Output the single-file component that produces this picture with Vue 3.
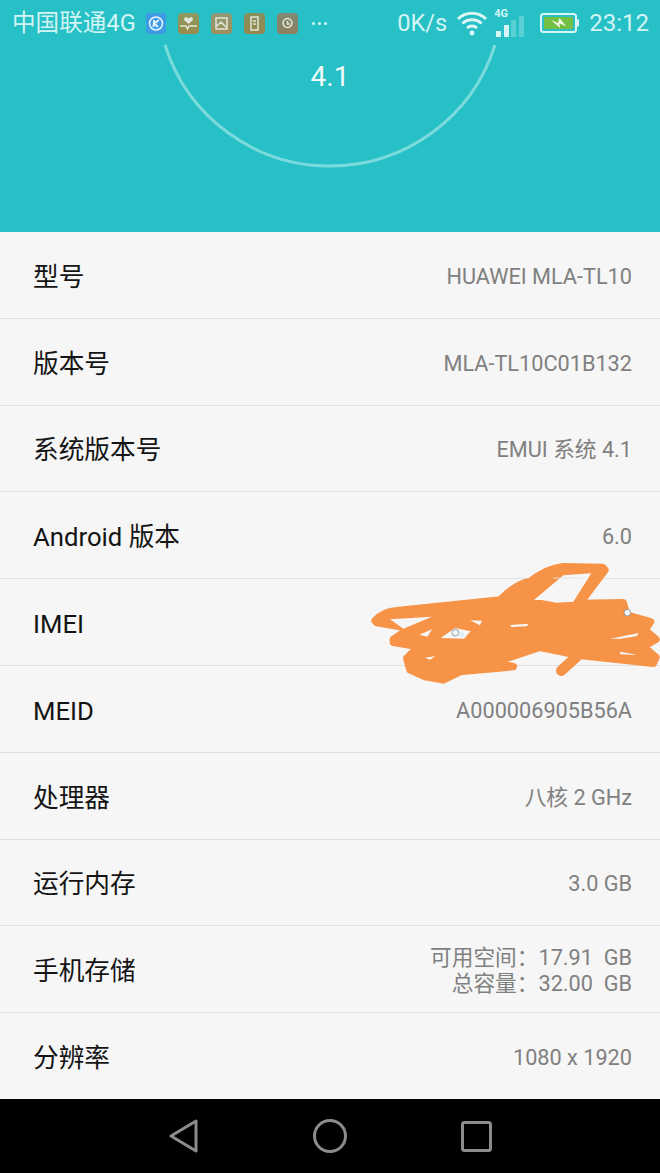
<template>
  <div class="screen">
    <header class="top">
      <svg class="gauge" width="660" height="232" viewBox="0 0 660 232">
        <path d="M165 45 A173 173 0 0 0 495 45" fill="none" stroke="#7bdadc" stroke-width="3" />
      </svg>
      <div class="status">
        <span class="carrier">中国联通4G</span>
        <div class="notif">
          <svg width="20" height="21" viewBox="0 0 20 21">
            <rect width="20" height="21" rx="3" fill="#3f9ae6" />
            <circle cx="10" cy="10.500" r="6.500" fill="none" stroke="#eaf6fc" stroke-width="1.500" />
            <path d="M8.200 7 L7.400 14 M12.800 7 L8.400 10.500 L11.800 14" fill="none" stroke="#eaf6fc" stroke-width="1.800" />
          </svg>
          <svg v-for="n in notifs" :key="n.id" width="21" height="21" viewBox="0 0 21 21">
            <defs>
              <linearGradient :id="'g' + n.id" x1="0" y1="0" x2="0" y2="1">
                <stop offset="0" :stop-color="n.from" />
                <stop offset="1" :stop-color="n.to" />
              </linearGradient>
            </defs>
            <rect width="21" height="21" rx="4" :fill="'url(#g' + n.id + ')'" />
            <path v-if="n.fill" :d="n.fill" fill="#dfe8d8" />
            <path :d="n.d" fill="none" stroke="#dfe8d8" stroke-width="1.500" />
          </svg>
          <span class="more"><i></i><i></i><i></i></span>
        </div>
        <div class="right">
          <span class="speed">0K/s</span>
          <svg width="32" height="26" viewBox="0 0 32 26">
            <path d="M2 9 A20 20 0 0 1 30 9 M6.500 13.500 A14 14 0 0 1 25.500 13.500 M11 18 A7.500 7.500 0 0 1 21 18" fill="none" stroke="#dff6f6" stroke-width="3" />
            <circle cx="16" cy="23" r="2.400" fill="#dff6f6" />
          </svg>
          <div class="signal">
            <span class="lte">4G</span>
            <i class="bar b1"></i><i class="bar b2"></i><i class="bar b3"></i><i class="bar b4"></i>
          </div>
          <svg class="batt" width="39" height="20" viewBox="0 0 39 20">
            <rect x="1" y="1" width="35" height="18" rx="2.500" fill="none" stroke="#d8f5f5" stroke-width="2" />
            <rect x="4" y="4" width="29" height="12" fill="#72bf44" />
            <rect x="36.500" y="6.500" width="2.500" height="7" fill="#d8f5f5" />
            <path d="M11 7 L18 10 L19.500 5 L26 13 L19.500 10.500 L20 15 Z" fill="#f3f6e0" />
          </svg>
          <span class="time">23:12</span>
        </div>
      </div>
      <div class="version">4.1</div>
    </header>

    <main class="list">
      <div v-for="row in rows" :key="row.label" class="row">
        <span class="label">{{ row.label }}</span>
        <div class="value">
          <div v-for="line in row.value" :key="line">{{ line }}</div>
        </div>
      </div>
      <!-- hand-drawn redaction over the IMEI value -->
      <svg class="scribble" width="300" height="140" viewBox="0 0 900 420">
        <path
          fill="#f69347"
          stroke="#f69347"
          stroke-width="22"
          stroke-linejoin="round"
          d="M45 212 Q70 185 110 182 L420 150 Q470 100 510 95 Q560 55 610 50 L728 52 L735 60 L660 160 L790 158 L800 195 L872 215 L855 240 L888 268 L850 290 L888 322 L880 340 L650 315 L540 292 L400 338 L460 350 L300 365 L250 390 L195 380 L150 360 L140 325 L175 290 L100 277 L100 268 L150 235 L50 218 Z"
        />
        <path d="M604 362 L650 320" fill="none" stroke="#f69347" stroke-width="32" stroke-linecap="round" />
        <g fill="#f6f6f6">
          <path d="M522 150 L610 76 L694 70 L640 155 L590 158 L545 150 Z" />
          <path d="M90 208 L216 200 L130 236 Z" />
          <path d="M178 254 L216 238 L202 260 Z" />
          <path d="M242 264 L285 234 L332 244 L312 266 Z" />
          <path d="M330 211 L366 212 L360 226 Z" />
          <path d="M450 225 L506 221 L500 229 L454 231 Z" />
          <path d="M194 323 L226 319 L210 329 Z" />
          <path d="M750 266 L836 249 L830 259 L780 266 Z" />
          <path d="M780 305 L836 315 L780 312 Z" />
        </g>
        <path d="M580 84 L668 84" stroke="#e0e0e0" stroke-width="3" />
        <circle cx="802" cy="188" r="10" fill="#f4f7f8" stroke="#68717a" stroke-width="2" />
        <circle cx="286" cy="248" r="10" fill="#f4f7f8" stroke="#68717a" stroke-width="2" />
        <circle cx="304" cy="254" r="8" fill="#e2eef5" />
      </svg>
    </main>

    <nav class="nav">
      <svg width="30" height="34" viewBox="0 0 30 34">
        <path d="M2 17 L27 2 V32 Z" fill="none" stroke="#8c8c8c" stroke-width="3" stroke-linejoin="round" />
      </svg>
      <svg width="34" height="34" viewBox="0 0 34 34">
        <circle cx="17" cy="17" r="15.500" fill="none" stroke="#8c8c8c" stroke-width="3" />
      </svg>
      <svg width="31" height="31" viewBox="0 0 31 31">
        <rect x="1.500" y="1.500" width="28" height="28" rx="2" fill="none" stroke="#8c8c8c" stroke-width="3" />
      </svg>
    </nav>
  </div>
</template>

<script setup>
const notifs = [
  {
    id: 1,
    from: '#8a9a62',
    to: '#9c8a4c',
    fill: 'M10.500 11 L6 7 Q6 3.500 8.500 4 L10.500 5.500 L12.500 4 Q15 3.500 15 7 Z',
    d: 'M2 13 H8 L9.500 16 L11 13 H19',
  },
  { id: 2, from: '#8e9a78', to: '#a08e58', d: 'M5 5 H16 V16 H5 Z M6 13 L10 9 L15 14' },
  { id: 3, from: '#84905c', to: '#98864e', d: 'M7 4 H14 V17 H7 Z M9 8 H12 M9 11 H12' },
  { id: 4, from: '#7f8a72', to: '#8f7f60', d: 'M15 10 A4.500 4.500 0 1 1 15 9.900 M10.500 8 V11 H13' },
]

const rows = [
  { label: '型号', value: ['HUAWEI MLA-TL10'] },
  { label: '版本号', value: ['MLA-TL10C01B132'] },
  { label: '系统版本号', value: ['EMUI 系统 4.1'] },
  { label: 'Android 版本', value: ['6.0'] },
  { label: 'IMEI', value: [] },
  { label: 'MEID', value: ['A000006905B56A'] },
  { label: '处理器', value: ['八核 2 GHz'] },
  { label: '运行内存', value: ['3.0 GB'] },
  { label: '手机存储', value: ['可用空间：17.91  GB', '总容量：32.00  GB'] },
  { label: '分辨率', value: ['1080 x 1920'] },
]
</script>

<style scoped>
.screen {
  width: 660px;
  height: 1173px;
  display: flex;
  flex-direction: column;
  overflow: hidden;
  font-family: Roboto, "Noto Sans CJK SC", sans-serif;
  background: #f6f6f6;
}

.top {
  position: relative;
  height: 232px;
  flex: none;
  background: #26c0c6;
}

.gauge {
  position: absolute;
  left: 0;
  top: 0;
}

.status {
  position: relative;
  height: 46px;
  display: flex;
  align-items: center;
  padding: 0 11px 0 12px;
  color: #d3f4f4;
  font-size: 24px;
  line-height: 30px;
}

.carrier {
  width: 134px;
  font-size: 23.600px;
  white-space: nowrap;
}

.notif {
  display: flex;
  align-items: center;
  gap: 12px;
}

.more {
  display: flex;
  gap: 3px;
  margin-left: 2px;
}

.more i {
  display: block;
  width: 3px;
  height: 3px;
  border-radius: 50%;
  background: #d3f4f4;
}

.right {
  margin-left: auto;
  display: flex;
  align-items: center;
}

.speed {
  margin-right: 9px;
  font-size: 23.600px;
}

.signal {
  position: relative;
  width: 28px;
  height: 28px;
  margin: 0 16px 0 8px;
  display: flex;
  align-items: flex-end;
  gap: 2.500px;
}

.lte {
  position: absolute;
  left: -2px;
  top: -2px;
  font-size: 11px;
  line-height: 13px;
  font-weight: 700;
}

.bar {
  display: block;
  width: 5px;
  background: #d8f5f5;
}

.b1 { height: 6px; }
.b2 { height: 12px; }
.b3 { height: 17px; opacity: 0.3; }
.b4 { height: 21px; opacity: 0.3; }

.batt {
  margin-right: 10px;
}

.version {
  position: relative;
  margin-top: 12px;
  text-align: center;
  color: #f2fbfb;
  font-size: 28px;
  line-height: 38px;
}

.list {
  position: relative;
  flex: 1;
  display: flex;
  flex-direction: column;
}

.row {
  flex: 1;
  display: flex;
  align-items: center;
  justify-content: space-between;
  padding: 4px 28px 0 33px;
  border-bottom: 1px solid #e0e0e0;
}

.row:last-of-type {
  border-bottom: none;
}

.label {
  font-size: 25.700px;
  line-height: 30px;
  color: #141414;
}

.value {
  text-align: right;
  font-size: 21.700px;
  line-height: 26px;
  color: #808080;
  white-space: pre;
}

.scribble {
  position: absolute;
  left: 360px;
  top: 318px;
}

.nav {
  height: 74px;
  flex: none;
  background: #000;
  display: flex;
  align-items: center;
  justify-content: center;
  gap: 114px;
}
</style>
